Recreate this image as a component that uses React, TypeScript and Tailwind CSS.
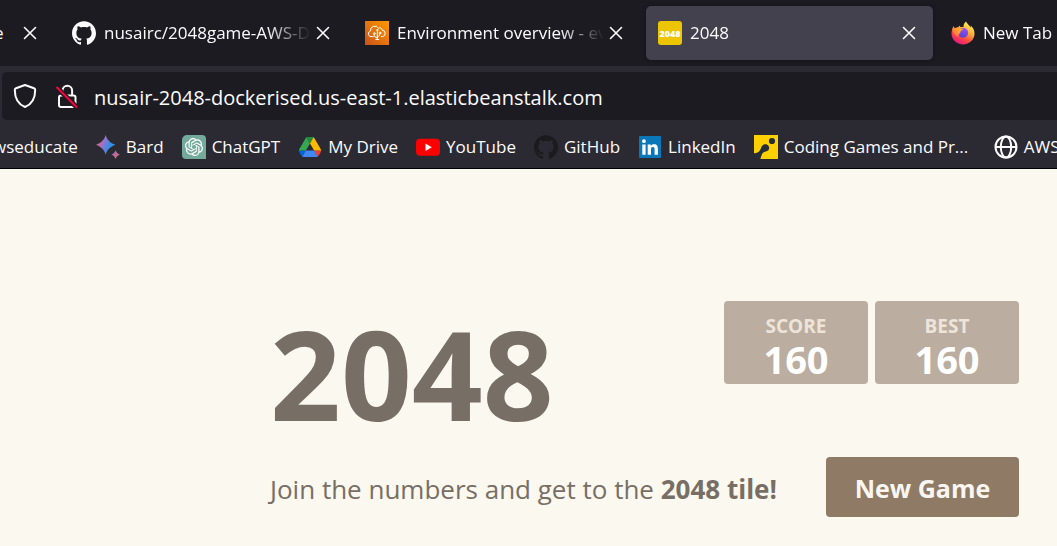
import type { ReactNode } from "react";
import { SiGithub, SiOpenai } from "react-icons/si";

function CloseIcon() {
  return (
    <svg viewBox="0 0 14 14" className="size-[14px]" fill="none" stroke="currentColor" strokeWidth="1.6" strokeLinecap="round">
      <path d="M1.5 1.5 12.5 12.5M12.5 1.5 1.5 12.5" />
    </svg>
  );
}

function BeanstalkIcon() {
  return (
    <svg viewBox="0 0 24 24" className="size-6">
      <defs>
        <linearGradient id="aws" x1="0" y1="1" x2="1" y2="0">
          <stop offset="0" stopColor="#c8511b" />
          <stop offset="1" stopColor="#ff9900" />
        </linearGradient>
      </defs>
      <rect width="24" height="24" fill="url(#aws)" />
      <g fill="none" stroke="#fff" strokeWidth="1" strokeLinecap="round">
        <path d="M8.3 15.6H7.2A2.9 2.9 0 0 1 5.5 10 4.3 4.3 0 0 1 13.5 7.300a2.200 2.200 0 0 1 3.600 1.800 3.300 3.300 0 0 1 .6 6.500h-1.400" />
        <path d="M12.300 18.500V9.500M12.300 16.800c-2.400 0-3-1.300-3-3M12.300 15.500c2 0 2.600-1 2.600-2.400" />
        <circle cx="9.300" cy="12.600" r=".9" />
        <circle cx="15" cy="12" r=".9" />
        <circle cx="12.300" cy="9" r=".6" />
        <path d="M10.800 18.500h3" />
      </g>
    </svg>
  );
}

function GameIcon() {
  return (
    <span className="flex size-6 items-center justify-center rounded-[3px] bg-[#edc500] text-[9px] leading-none font-extrabold text-white">
      2048
    </span>
  );
}

function FirefoxIcon() {
  return (
    <svg viewBox="0 0 24 24" className="size-6">
      <defs>
        <linearGradient id="fx" x1=".85" y1=".1" x2=".3" y2="1">
          <stop offset="0" stopColor="#fff44f" />
          <stop offset=".35" stopColor="#ffb03a" />
          <stop offset=".65" stopColor="#ff4f3c" />
          <stop offset="1" stopColor="#e31587" />
        </linearGradient>
        <linearGradient id="fxHead" x1="1" y1="0" x2="0" y2="1">
          <stop offset="0" stopColor="#ffbd3a" />
          <stop offset=".5" stopColor="#ff9a33" />
          <stop offset="1" stopColor="#ff5c3a" />
        </linearGradient>
        <linearGradient id="fxCore" x1=".7" y1="0" x2=".3" y2="1">
          <stop offset="0" stopColor="#9a4dff" />
          <stop offset="1" stopColor="#5145cf" />
        </linearGradient>
      </defs>
      <path d="M15 .4c1 2.300 3.300 3.600 4.900 6.200.1-.6 0-1.200-.3-2.100 2.500 2 3.900 4.800 3.900 8.100C23.500 18.800 18.400 23.500 12 23.500S.5 18.800.5 12.600c0-2.900.9-5.200 2.100-7.100.2 1 .5 1.500 1 1.900 2-.9 5.800-1.200 8.900-1.300C12.300 4 13.200 1.800 15 .4Z" fill="url(#fx)" />
      <circle cx="12.200" cy="11.800" r="4.900" fill="url(#fxCore)" />
      <path d="M2.600 5c.2 1.100.6 1.700 1.200 2C4.800 6.500 6 6.300 7.100 6.400c.5-.8 1.200-1.500 2.100-1.900-.3.900-.2 1.800.3 2.700.5.500 1.200.8 2.900.9-.2 1.100-1.900 1.400-2.500 1.900-.5.600-.2 1.600-1 2.400-1.100.6-1.900 1.500-1.600 3.100C4 15 2 12 1.300 9 1.500 7.500 2 6 2.600 5Z" fill="url(#fxHead)" />
    </svg>
  );
}

function ShieldIcon() {
  return (
    <svg viewBox="0 0 24 26" className="h-[26px] w-6" fill="none" stroke="#fbfbfe" strokeWidth="2" strokeLinejoin="round">
      <path d="M12 2 21 5.300c.8.300 1.200.9 1.200 1.700C22.200 15 19.500 21 12 24 4.500 21 1.800 15 1.800 7c0-.8.400-1.400 1.200-1.700Z" />
    </svg>
  );
}

function InsecureIcon() {
  return (
    <svg viewBox="0 0 24 26" className="h-[26px] w-6" fill="none" stroke="#fbfbfe" strokeWidth="2">
      <path d="M7.500 12V7.500a4.800 4.800 0 0 1 9.600 0V12" />
      <rect x="4" y="12.500" width="16.500" height="11.500" rx="2" />
      <path d="M1 3.500 22 24.500" stroke="#1c1b22" strokeWidth="5" />
      <path d="M1.500 4 22 24.500" stroke="#ff0039" />
    </svg>
  );
}

function BardIcon() {
  return (
    <svg viewBox="0 0 24 24" className="size-6">
      <defs>
        <linearGradient id="bard" x1="0" y1=".3" x2="1" y2=".7">
          <stop offset="0" stopColor="#f06a5c" />
          <stop offset=".35" stopColor="#9b72cb" />
          <stop offset=".7" stopColor="#2f8fe8" />
          <stop offset="1" stopColor="#3b9be0" />
        </linearGradient>
        <linearGradient id="bardSmall" x1="0" y1="0" x2="1" y2="1">
          <stop offset="0" stopColor="#8f6bd8" />
          <stop offset="1" stopColor="#ee6a55" />
        </linearGradient>
      </defs>
      <path d="M9.700 0c1.500 5 4.500 8 9.700 9.800-5.200 1.900-8.200 4.900-9.700 9.900C8.100 14.700 5.100 11.700 0 9.800 5.100 8 8.100 5 9.700 0Z" fill="url(#bard)" />
      <path d="M19.600 15.200c.7 2.200 2.200 3.700 4.400 4.400-2.200.8-3.700 2.200-4.400 4.400-.8-2.200-2.200-3.600-4.400-4.400 2.200-.7 3.600-2.200 4.400-4.400Z" fill="url(#bardSmall)" />
    </svg>
  );
}

function ChatGptIcon() {
  return (
    <span className="flex size-6 items-center justify-center rounded-tl-[5px] rounded-tr-[4px] rounded-bl-[4px] bg-[#74aa9c] text-white">
      <SiOpenai className="size-[18px]" />
    </span>
  );
}

function DriveIcon() {
  return (
    <svg viewBox="0 0 87.3 78" className="h-5 w-6">
      <path d="m6.600 66.850 3.850 6.650c.8 1.400 1.950 2.500 3.300 3.300l13.750-23.800H0c0 1.550.4 3.100 1.200 4.500z" fill="#0066da" />
      <path d="M43.650 25 29.900 1.200c-1.350.8-2.500 1.900-3.300 3.300L1.200 48.500A9.060 9.060 0 0 0 0 53h27.500z" fill="#34a853" />
      <path d="M73.550 76.800c1.350-.8 2.500-1.900 3.300-3.300l1.600-2.750L86.100 57.500c.8-1.400 1.200-2.950 1.200-4.500H59.800l5.850 11.500z" fill="#ea4335" />
      <path d="M43.650 25 57.400 1.200C56.050.4 54.500 0 52.900 0H34.400c-1.600 0-3.150.45-4.500 1.200z" fill="#1e8e3e" />
      <path d="M59.800 53H27.500L13.750 76.800c1.350.8 2.900 1.200 4.500 1.200h50.800c1.600 0 3.150-.45 4.500-1.200z" fill="#4285f4" />
      <path d="m73.400 26.500-12.700-22c-.8-1.400-1.950-2.500-3.300-3.300L43.650 25 59.800 53h27.450c0-1.550-.4-3.100-1.200-4.500z" fill="#ffba00" />
    </svg>
  );
}

function YouTubeIcon() {
  return (
    <svg viewBox="0 0 24 24" className="size-6">
      <rect y="3.700" width="24" height="17" rx="4" fill="#ff0000" />
      <path d="M9.500 8.500v7.400l6.300-3.700Z" fill="#fff" />
    </svg>
  );
}

function LinkedInIcon() {
  return (
    <svg viewBox="0 0 24 24" className="size-6">
      <rect x="1" y="1" width="22" height="22" rx="1" fill="#0a78b8" />
      <path d="M4.300 9.500h3.300v10.300H4.300ZM5.950 4.300a1.900 1.900 0 1 1 0 3.800 1.900 1.900 0 0 1 0-3.800ZM9.700 9.500h3.100v1.400c.6-1 1.700-1.700 3.200-1.700 3.200 0 3.900 2.100 3.900 4.900v5.700h-3.300v-5.100c0-1.300 0-2.700-1.700-2.700S13 13.300 13 14.600v5.200H9.700Z" fill="#fff" />
    </svg>
  );
}

function CodinGameIcon() {
  return (
    <svg viewBox="0 0 24 24" className="size-6">
      <rect width="24" height="24" fill="#ffd000" />
      <circle cx="18" cy="6" r="3.100" fill="#252e38" />
      <path d="M0 18.200c2.500.2 4.300-.7 5.600-2.400 1.200-1.600 1.300-3 2.200-4.600 1.200-2 3.600-2.500 5.400-1.500 2.200 1.100 2.700 4 1 5.600-1.400 1.300-3 1.100-4.400 1.900C7.600 18.500 7.600 20.500 6.300 24H0Z" fill="#252e38" />
    </svg>
  );
}

function GlobeIcon() {
  return (
    <svg viewBox="0 0 24 24" className="size-6" fill="none" stroke="#fbfbfe" strokeWidth="2">
      <circle cx="12" cy="12" r="10.500" />
      <ellipse cx="12" cy="12" rx="5.200" ry="10.500" />
      <path d="M1.500 12h21" />
    </svg>
  );
}

type TabProps = { title: string; icon: ReactNode; active?: boolean };

function Tab({ title, icon, active = false }: TabProps) {
  return (
    <div className={`flex h-[54px] w-[287px] shrink-0 items-center rounded-[5px] pr-3 pl-3 ${active ? "bg-[#42414d] shadow-[0_0_4px_rgba(0,0,0,0.4)]" : ""}`}>
      <button type="button" className="flex min-w-0 flex-1 items-center gap-2 text-left">
        <span className="shrink-0">{icon}</span>
        <span className="min-w-0 flex-1 overflow-hidden mask-[linear-gradient(to_right,black_calc(100%-44px),transparent)] whitespace-nowrap">
          {title}
        </span>
      </button>
      <button type="button" aria-label={`Close ${title}`} className="flex size-6 shrink-0 items-center justify-center">
        <CloseIcon />
      </button>
    </div>
  );
}

const bookmarks: { label: string; icon: ReactNode; wide?: boolean }[] = [
  { label: "Bard", icon: <BardIcon /> },
  { label: "ChatGPT", icon: <ChatGptIcon /> },
  { label: "My Drive", icon: <DriveIcon /> },
  { label: "YouTube", icon: <YouTubeIcon /> },
  { label: "GitHub", icon: <SiGithub className="size-6 text-[#1b1a1d]" /> },
  { label: "LinkedIn", icon: <LinkedInIcon /> },
  { label: "Coding Games and Pr...", icon: <CodinGameIcon />, wide: true },
  { label: "AWS", icon: <GlobeIcon /> },
];

function ScoreBox({ label, value }: { label: string; value: number }) {
  return (
    <div className="flex h-[83px] w-36 flex-col items-center rounded-[4px] bg-[#bbada0] pt-3 font-bold">
      <span className="text-[19px] leading-[26px] text-[#eee4da]">{label}</span>
      <span className="text-[38px] leading-10 text-white">{value}</span>
    </div>
  );
}

export default function App() {
  return (
    <div className="flex min-h-screen flex-col overflow-hidden bg-[#fbf8ef] font-['Open_Sans','Noto_Sans',sans-serif]">
      <header className="border-b border-black bg-[#2b2a33] text-[17px] leading-6 text-[#fbfbfe]">
        <nav aria-label="Tabs" className="flex h-[66px] items-center gap-[6px] overflow-hidden bg-[#1c1b22]">
          <div className="flex w-[54px] shrink-0 items-center justify-between pr-3">
            <span className="-ml-[6px]">e</span>
            <button type="button" aria-label="Close tab" className="flex size-6 items-center justify-center">
              <CloseIcon />
            </button>
          </div>
          <Tab title="nusairc/2048game-AWS-Docker" icon={<SiGithub className="size-6" />} />
          <Tab title="Environment overview - events" icon={<BeanstalkIcon />} />
          <Tab title="2048" icon={<GameIcon />} active />
          <Tab title="New Tab" icon={<FirefoxIcon />} />
        </nav>

        <div className="pt-[6px] pl-[2px]">
          <div className="flex h-12 items-center rounded-l-[5px] bg-[#1c1b22] pl-[11px]">
            <button type="button" aria-label="Tracking protection">
              <ShieldIcon />
            </button>
            <button type="button" aria-label="Connection not secure" className="ml-[18px]">
              <InsecureIcon />
            </button>
            <input
              type="text"
              aria-label="Address"
              defaultValue="nusair-2048-dockerised.us-east-1.elasticbeanstalk.com"
              className="ml-[15px] min-w-0 flex-1 bg-transparent pt-1 text-[20px] leading-7 outline-none"
            />
          </div>
        </div>

        <nav aria-label="Bookmarks" className="flex h-12 items-center gap-[18px] overflow-hidden pt-[6px] whitespace-nowrap">
          <a href="#awseducate" className="-ml-[7px] shrink-0">wseducate</a>
          {bookmarks.map((b) => (
            <a key={b.label} href="#bookmark" className={`flex shrink-0 items-center gap-[6px] ${b.wide ? "min-w-[222px]" : ""}`}>
              {b.icon}
              <span>{b.label}</span>
            </a>
          ))}
        </nav>
      </header>

      <main className="flex-1 pt-[132px] pr-[38px] pl-[270px] text-[#776e65]">
        <div className="flex items-start justify-between">
          <h1 className="pt-2 text-[124px] leading-[128px] font-bold">2048</h1>
          <div className="flex gap-[7px]">
            <ScoreBox label="SCORE" value={160} />
            <ScoreBox label="BEST" value={160} />
          </div>
        </div>
        <div className="mt-5 flex items-center justify-between">
          <p className="pt-1 text-[26px] leading-9 whitespace-nowrap">
            Join the numbers and get to the <strong className="font-bold">2048 tile!</strong>
          </p>
          <button type="button" className="h-[60px] w-[193px] shrink-0 rounded-[4px] bg-[#8f7a66] pt-1 text-[25px] font-bold text-[#f9f6f2]">
            New Game
          </button>
        </div>
      </main>
    </div>
  );
}
